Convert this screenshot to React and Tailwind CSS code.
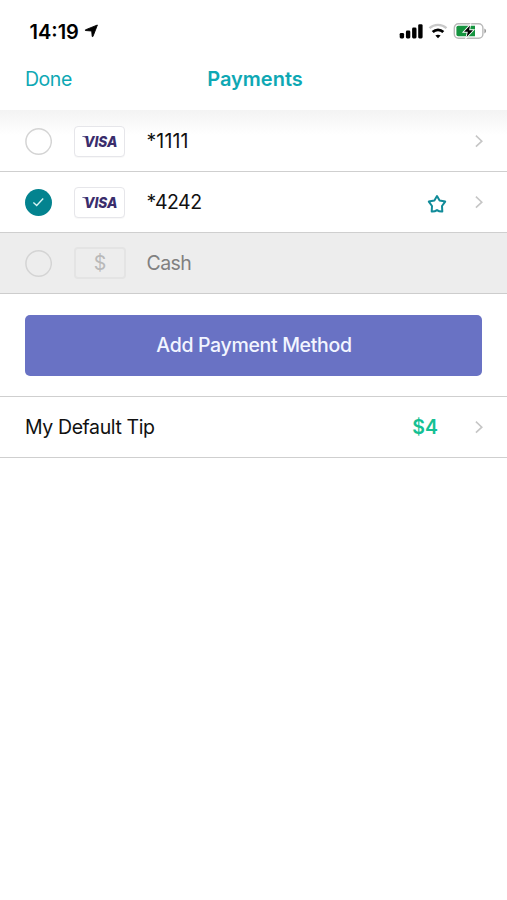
function StatusBar() {
  return (
    <div className="flex h-[62px] items-center pl-[29.5px] pr-[20px] text-black">
      <span className="w-[54.5px] whitespace-nowrap pt-px text-[20px] font-semibold leading-6">14:19</span>
      <svg className="h-[14px] w-[15px]" viewBox="0 0 15 14" fill="currentColor" stroke="currentColor">
        <path d="M13.4 1 L8.9 12.6 L8.2 12.5 L7.7 7 L1.4 6.5 L1.3 5.9 Z" strokeWidth="0.9" strokeLinejoin="round" />
      </svg>
      <div className="ml-auto flex items-center">
        <svg className="h-[16px] w-[24px]" viewBox="0 0 24 16" fill="currentColor">
          <rect x="0.7" y="10" width="4.4" height="5.4" rx="1.3" />
          <rect x="6.9" y="7.6" width="4.4" height="7.8" rx="1.3" />
          <rect x="13.1" y="4.6" width="4.4" height="10.8" rx="1.3" />
          <rect x="19.2" y="1.2" width="4.4" height="14.2" rx="1.3" />
        </svg>
        <svg className="ml-[5px] h-[16px] w-[20px]" viewBox="0 0 20 16" fill="none">
          <path d="M1.5 5.2 C6.2 0.8 13.8 0.8 18.5 5.2" stroke="#c9c9c9" strokeWidth="2.3" />
          <path d="M4.7 9 C7.7 6.1 12.3 6.1 15.3 9" stroke="#000" strokeWidth="2.8" />
          <path d="M7.4 12.6 C8.8 11.3 11.2 11.3 12.6 12.6 L10 15.2 Z" fill="#000" />
        </svg>
        <svg className="ml-[5px] h-[18px] w-[34px]" viewBox="0 0 34 18" fill="none">
          <rect x="1.3" y="1.8" width="28.6" height="14.4" rx="4.2" stroke="#b9b9b9" strokeWidth="1.4" />
          <path d="M31.4 6.6 C33.6 7.4 33.6 10.6 31.4 11.4 Z" fill="#999" />
          <path d="M5.2 3.8 H22 V14.2 H5.2 Q3.4 14.2 3.4 12.4 V5.6 Q3.4 3.8 5.2 3.8 Z" fill="#15943f" />
          <path
            d="M17 3.4 L11 9.8 H14.8 L13.6 15 L20 8.2 H16.2 Z"
            fill="#000"
            stroke="#fff"
            strokeWidth="1.8"
            paintOrder="stroke"
          />
        </svg>
      </div>
    </div>
  );
}

function Chevron() {
  return (
    <svg className="h-[14px] w-[9px]" viewBox="0 0 9 14" fill="none">
      <path d="M1.9 1.7 L7.8 7.2 L1.9 12.7" stroke="#c6c6c6" strokeWidth="1.6" />
    </svg>
  );
}

function Radio({ checked }) {
  if (checked) {
    return (
      <span className="flex h-[27px] w-[27px] items-center justify-center rounded-full bg-[#03838f]">
        <svg className="h-[10px] w-[13px]" viewBox="0 0 13 10" fill="none">
          <path d="M1.4 5.4 L4.7 8.4 L11.2 1.6" stroke="#d8f4f4" strokeWidth="1.4" />
        </svg>
      </span>
    );
  }
  return (
    <svg className="h-[27px] w-[27px]" viewBox="0 0 27 27" fill="none">
      <circle cx="13.6" cy="13.5" r="12.7" stroke="#d4d4d4" strokeWidth="1.5" />
    </svg>
  );
}

function CardBadge({ type }) {
  if (type === "cash") {
    return (
      <span className="flex h-[32px] w-[52px] items-center justify-center rounded-[4px] border-2 border-[#e4e4e4] pt-px text-[19.5px] leading-none text-[#b9b9b9]">
        $
      </span>
    );
  }
  return (
    <span className="flex h-[31px] w-[51px] items-center justify-center rounded-[4px] border border-[#e6e6ea] bg-white shadow-[0_1px_1px_rgba(0,0,0,0.03)]">
      <svg className="h-[24px] w-[44px]" viewBox="0 0 44 24" fill="#3a2d6c">
        <path d="M4.2 7.2 H8.6 L9.6 10.2 C8.4 8.8 6.6 8 4.2 7.7 Z" />
        <text
          x="6"
          y="18"
          textLength="33.5"
          lengthAdjust="spacingAndGlyphs"
          className="text-[14.8px] font-extrabold italic"
        >
          VISA
        </text>
      </svg>
    </span>
  );
}

function PaymentRow({ type, label, checked, favorite, disabled }) {
  return (
    <div
      className={
        disabled
          ? "flex h-[61px] items-center border-b border-[#cdcdcd] bg-[#ededed] pl-[25px] pr-[24px] text-[#808080]"
          : "flex h-[61px] items-center border-b border-[#cfcfcf] pl-[25px] pr-[24px] text-[#111]"
      }
    >
      <Radio checked={checked} />
      <span className="ml-[22px] flex w-[72.5px]">
        <CardBadge type={type} />
      </span>
      <span className={type === "cash" ? "text-[19.5px] leading-6 tracking-[-0.55px]" : label === "*1111" ? "text-[19.5px] leading-6 tracking-[0.1px]" : "text-[19.5px] leading-6 tracking-[-0.5px]"}>
        {label}
      </span>
      <div className="ml-auto flex items-center">
        {favorite && (
          <svg className="mr-[27px] mt-1 h-[20px] w-[20px]" viewBox="0 0 20 20" fill="none">
            <path
              d="M10 2 L12.6 6.4 L18.2 7.6 L15 12 L15.3 17.6 Q12.2 17.8 10 16.1 Q7.8 17.8 4.7 17.6 L5 12 L1.8 7.6 L7.4 6.4 Z"
              stroke="#108b99"
              strokeWidth="2"
              strokeLinejoin="round"
            />
          </svg>
        )}
        {!disabled && <Chevron />}
      </div>
    </div>
  );
}

export default function App() {
  return (
    <div className="min-h-[900px] w-full bg-white font-['Inter',sans-serif]">
      <StatusBar />
      <header className="grid h-[48px] grid-cols-3 items-start px-[25px] pt-[5px] text-[19.5px] leading-6 text-[#0ea8b4]">
        <button className="text-left tracking-[-0.45px]">Done</button>
        <h1 className="pl-[3px] text-center text-[20px] font-semibold">Payments</h1>
      </header>

      <main>
        <div className="bg-linear-to-b from-[#f3f3f3] to-white to-40% pt-px">
          <PaymentRow type="visa" label="*1111" />
        </div>
        <PaymentRow type="visa" label="*4242" checked favorite />
        <PaymentRow type="cash" label="Cash" disabled />

        <div className="border-b border-[#cfcfcf] px-[25px] pb-[20px] pt-[21px]">
          <button className="h-[61px] w-full rounded-[5px] bg-[#6972c4] pl-px pt-px text-[19.5px] font-medium tracking-[-0.33px] text-[#f2f5ff]">
            Add Payment Method
          </button>
        </div>

        <div className="flex h-[61px] items-center border-b border-[#cfcfcf] pl-[25px] pr-[24px]">
          <span className="text-[19.5px] leading-6 tracking-[-0.4px] text-[#111]">My Default Tip</span>
          <span className="ml-auto mr-[36px] text-[19.5px] font-semibold leading-6 text-[#14c093]">$4</span>
          <Chevron />
        </div>
      </main>
    </div>
  );
}
